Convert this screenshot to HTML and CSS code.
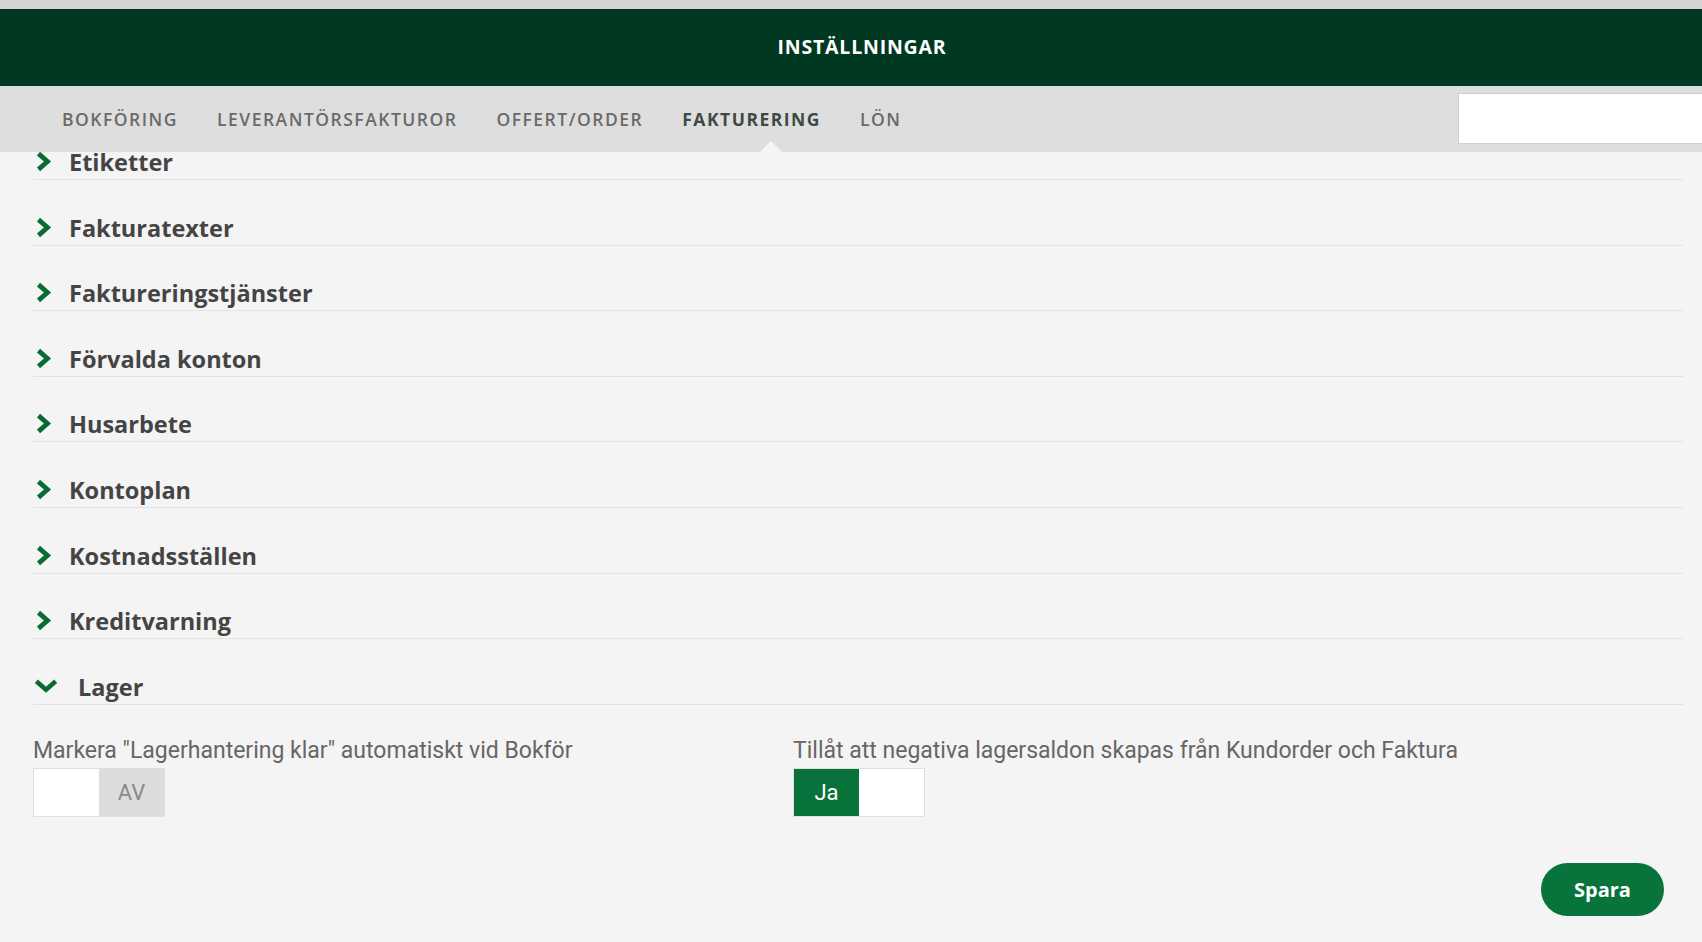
FILE: index.html
```html
<!doctype html>
<html lang="sv">
    <head>
        <meta charset="UTF-8" />
        <meta name="viewport" content="width=device-width, initial-scale=1.0" />
        <title>Inställningar</title>
        <link rel="stylesheet" href="styles.css">
    </head>
    <body>
        <div class="top-strip"></div>
        <header class="app-header">
            <h1>INSTÄLLNINGAR</h1>
        </header>
        <nav class="tabs">
            <a class="tab">BOKFÖRING</a>
            <a class="tab">LEVERANTÖRSFAKTUROR</a>
            <a class="tab">OFFERT/ORDER</a>
            <a class="tab active">FAKTURERING</a>
            <a class="tab">LÖN</a>
            <input class="search" type="text" />
        </nav>

        <main class="content">
            <div class="sections">
                <div class="section-row">
                    <svg class="chev" viewBox="0 0 16 18"><polyline points="4,2 12,9 4,16" /></svg>
                    <span>Etiketter</span>
                </div>
                <div class="section-row">
                    <svg class="chev" viewBox="0 0 16 18"><polyline points="4,2 12,9 4,16" /></svg>
                    <span>Fakturatexter</span>
                </div>
                <div class="section-row">
                    <svg class="chev" viewBox="0 0 16 18"><polyline points="4,2 12,9 4,16" /></svg>
                    <span>Faktureringstjänster</span>
                </div>
                <div class="section-row">
                    <svg class="chev" viewBox="0 0 16 18"><polyline points="4,2 12,9 4,16" /></svg>
                    <span>Förvalda konton</span>
                </div>
                <div class="section-row">
                    <svg class="chev" viewBox="0 0 16 18"><polyline points="4,2 12,9 4,16" /></svg>
                    <span>Husarbete</span>
                </div>
                <div class="section-row">
                    <svg class="chev" viewBox="0 0 16 18"><polyline points="4,2 12,9 4,16" /></svg>
                    <span>Kontoplan</span>
                </div>
                <div class="section-row">
                    <svg class="chev" viewBox="0 0 16 18"><polyline points="4,2 12,9 4,16" /></svg>
                    <span>Kostnadsställen</span>
                </div>
                <div class="section-row">
                    <svg class="chev" viewBox="0 0 16 18"><polyline points="4,2 12,9 4,16" /></svg>
                    <span>Kreditvarning</span>
                </div>
                <div class="section-row open">
                    <svg class="chev-down" viewBox="0 0 22 14"><polyline points="2,3 11,11 20,3" /></svg>
                    <span>Lager</span>
                </div>
            </div>

            <div class="settings">
                <div class="setting">
                    <label>Markera "Lagerhantering klar" automatiskt vid Bokför</label>
                    <div class="toggle">
                        <span class="half blank"></span>
                        <span class="half off">AV</span>
                    </div>
                </div>
                <div class="setting">
                    <label>Tillåt att negativa lagersaldon skapas från Kundorder och Faktura</label>
                    <div class="toggle">
                        <span class="half on">Ja</span>
                        <span class="half blank"></span>
                    </div>
                </div>
            </div>

            <div class="actions">
                <button class="save">Spara</button>
            </div>
        </main>
    </body>
</html>
```

FILE: styles.css
```css
body {
    font-family: "Open Sans", "DejaVu Sans", sans-serif;
    margin: 0;
    padding: 0;
    background-color: #f4f4f4;
    overflow: hidden;
}

.top-strip {
    height: 9px;
    background-color: #d4d4d4;
}

.app-header {
    position: relative;
    z-index: 2;
    height: 77px;
    background-color: #003822;
    display: flex;
    align-items: center;
    justify-content: center;
}
.app-header h1 {
    margin: 0;
    color: #fff;
    font-size: 19.5px;
    font-weight: 700;
    letter-spacing: 0.8px;
    padding: 0 0 2px 22px;
}

.tabs {
    position: relative;
    z-index: 2;
    height: 66px;
    background-color: #dedede;
    display: flex;
    align-items: center;
    padding-left: 62px;
}
.tab {
    position: relative;
    color: #6a6a6a;
    font-size: 17.5px;
    font-weight: 600;
    letter-spacing: 1.5px;
    margin-right: 39px;
    cursor: pointer;
}
.tab.active {
    color: #3e4a44;
    font-weight: 700;
}
.tab.active::after {
    content: "";
    position: absolute;
    left: calc(50% + 19px);
    bottom: -21px;
    margin-left: -11px;
    border-left: 11px solid transparent;
    border-right: 11px solid transparent;
    border-bottom: 11px solid #f4f4f4;
}
.search {
    margin-left: auto;
    width: 250px;
    height: 51px;
    box-sizing: border-box;
    border: 1px solid #d0d0d0;
    background: #fff;
    margin-right: -6px;
    margin-top: -1px;
}

.content {
    padding: 0 19px 0 33px;
}

.sections {
    margin-top: -37.5px;
}
.section-row {
    height: 65.6px;
    border-bottom: 1px solid #e2e2e2;
    display: flex;
    align-items: flex-end;
    padding-bottom: 3px;
    box-sizing: border-box;
    color: #444;
    font-size: 23.5px;
    font-weight: 700;
}
.section-row span {
    line-height: 28px;
}
.chev {
    width: 18px;
    height: 21px;
    margin: 0 17px 4px 1px;
}
.chev polyline,
.chev-down polyline {
    fill: none;
    stroke: #0a6b31;
    stroke-width: 4.2;
}
.chev-down {
    width: 24px;
    height: 15px;
    margin: 0 20px 8px 1px;
}

.settings {
    display: grid;
    grid-template-columns: 760px 1fr;
    margin-top: 32px;
}
.setting label {
    display: block;
    font-family: "Roboto", "Liberation Sans", sans-serif;
    font-size: 23px;
    line-height: 28px;
    color: #666;
    margin-bottom: 3px;
}
.toggle {
    display: flex;
    width: 132px;
    height: 49px;
    border: 1px solid #e0e0e0;
    box-sizing: border-box;
    background: #fff;
}
.half {
    flex: 1;
    display: flex;
    align-items: center;
    justify-content: center;
    font-family: "Roboto", "Liberation Sans", sans-serif;
    font-size: 22px;
}
.half.off {
    background-color: #dcdcdc;
    color: #8a8a8a;
}
.half.on {
    background-color: #08723a;
    color: #fff;
}

.actions {
    display: flex;
    justify-content: flex-end;
    padding-right: 19px;
    margin-top: 46px;
}
.save {
    width: 123px;
    height: 53px;
    border: none;
    border-radius: 27px;
    background-color: #08733a;
    color: #fff;
    font-family: "Open Sans", sans-serif;
    font-size: 20px;
    font-weight: 700;
    cursor: pointer;
}
```
